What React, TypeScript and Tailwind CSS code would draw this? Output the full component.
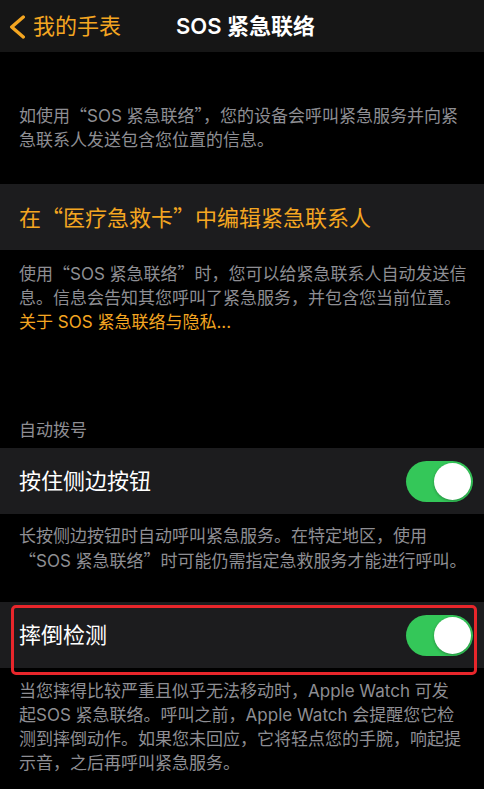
import React from "react";

const Q = ({ c }: { c: string }) => (
  <span className="font-['Noto_Sans_CJK_SC',sans-serif]">{c}</span>
);

const Toggle = () => (
  <div className="w-[67px] h-[41px] rounded-full bg-[#34c759] p-[2px] flex justify-end items-center">
    <div className="w-[37px] h-[37px] rounded-full bg-white shadow-[0_1px_3px_rgba(0,0,0,0.3)]" />
  </div>
);

const Line = ({ children }: { children: React.ReactNode }) => (
  <span className="block whitespace-nowrap">{children}</span>
);

export default function App() {
  return (
    <div className="w-[484px] h-[789px] overflow-hidden bg-black font-['Inter','Noto_Sans_CJK_SC',sans-serif]">
      {/* Nav bar */}
      <div className="h-[52px] bg-[#161616] grid grid-cols-[1fr_auto_1fr] items-center">
        <div className="flex items-center pl-[9px]">
          <svg width="18" height="26" viewBox="0 0 18 26" className="mr-[6px]">
            <path d="M14.3 4 L2.7 14 L14.3 24" fill="none" stroke="#f4a621" strokeWidth="3.4" strokeLinecap="round" strokeLinejoin="round" />
          </svg>
          <span className="text-[22px] text-[#f4a621] leading-none">我的手表</span>
        </div>
        <div className="text-[22px] font-semibold text-white leading-none ml-[7px]">SOS 紧急联络</div>
        <div />
      </div>

      {/* Paragraph 1 */}
      <div className="pt-[51px] px-[19px] text-[17px] leading-[24px] text-[#8e8e93]">
        <Line>如使用<Q c="“" />SOS 紧急联络<Q c="”" />，您的设备会呼叫紧急服务并向紧</Line>
        <Line>急联系人发送包含您位置的信息。</Line>
      </div>

      {/* Cell: medical ID */}
      <div className="mt-[32px] h-[66px] bg-[#1c1c1e] flex items-center px-[19px]">
        <span className="text-[22px] text-[#f4a621] whitespace-nowrap">在<Q c="“" />医疗急救卡<Q c="”" />中编辑紧急联系人</span>
      </div>

      {/* Paragraph 2 */}
      <div className="pt-[11px] px-[19px] text-[17px] leading-[24px] text-[#8e8e93]">
        <Line>使用<Q c="“" />SOS 紧急联络<Q c="”" />时，您可以给紧急联系人自动发送信</Line>
        <Line>息。信息会告知其您呼叫了紧急服务，并包含您当前位置。</Line>
        <Line><span className="text-[#f4a621]">关于 SOS 紧急联络与隐私...</span></Line>
      </div>

      {/* Section header */}
      <div className="mt-[84px] px-[19px] text-[17px] leading-[24px] text-[#8e8e93]">自动拨号</div>

      {/* Cell: side button */}
      <div className="mt-[6px] h-[66px] bg-[#1c1c1e] flex items-center justify-between pl-[19px] pr-[11px]">
        <span className="text-[22px] text-white">按住侧边按钮</span>
        <Toggle />
      </div>

      {/* Paragraph 3 */}
      <div className="pt-[10px] px-[19px] text-[17px] leading-[24px] text-[#8e8e93]">
        <Line>长按侧边按钮时自动呼叫紧急服务。在特定地区，使用</Line>
        <Line><Q c="“" />SOS 紧急联络<Q c="”" />时可能仍需指定急救服务才能进行呼叫。</Line>
      </div>

      {/* Cell: fall detection */}
      <div className="relative mt-[29px]">
        <div className="h-[66px] bg-[#1c1c1e] flex items-center justify-between pl-[19px] pr-[11px]">
          <span className="text-[22px] text-white">摔倒检测</span>
          <Toggle />
        </div>
        <div className="absolute left-[11px] top-[3px] w-[466px] h-[70px] border-[3px] border-[#e8262b] rounded-[5px] pointer-events-none" />
      </div>

      {/* Paragraph 4 */}
      <div className="pt-[11px] px-[19px] text-[17px] leading-[24px] text-[#8e8e93]">
        <Line>当您摔得比较严重且似乎无法移动时，Apple Watch 可发</Line>
        <Line>起SOS 紧急联络。呼叫之前，Apple Watch 会提醒您它检</Line>
        <Line>测到摔倒动作。如果您未回应，它将轻点您的手腕，响起提</Line>
        <Line>示音，之后再呼叫紧急服务。</Line>
      </div>
    </div>
  );
}
